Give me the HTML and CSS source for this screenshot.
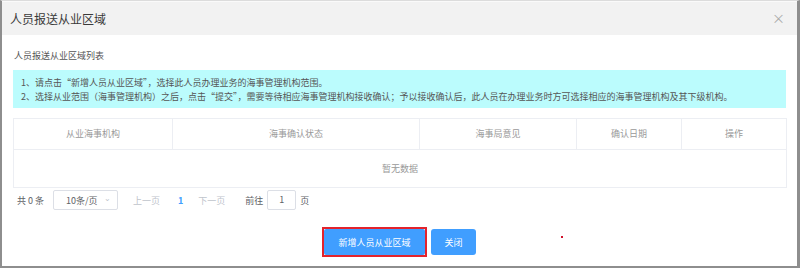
FILE: index.html
```html
<!DOCTYPE html>
<html lang="zh-CN">
<head>
  <meta charset="UTF-8" />
  <title>人员报送从业区域</title>
  <link rel="stylesheet" href="styles.css">
</head>
<body>
  <div class="dialog">
    <!-- Header -->
    <div class="dialog-header">
      <span class="dialog-title">人员报送从业区域</span>
      <span class="dialog-close">&times;</span>
    </div>

    <div class="dialog-body">
      <div class="caption">人员报送从业区域列表</div>

      <div class="tips">
        <p>1、请点击“新增人员从业区域”，选择此人员办理业务的海事管理机构范围。</p>
        <p>2、选择从业范围（海事管理机构）之后，点击“提交”，需要等待相应海事管理机构接收确认；予以接收确认后，此人员在办理业务时方可选择相应的海事管理机构及其下级机构。</p>
      </div>

      <table class="area-table">
        <colgroup>
          <col style="width: 159px">
          <col style="width: 247px">
          <col style="width: 157px">
          <col style="width: 105px">
          <col style="width: 105px">
        </colgroup>
        <thead>
          <tr>
            <th>从业海事机构</th>
            <th>海事确认状态</th>
            <th>海事局意见</th>
            <th>确认日期</th>
            <th>操作</th>
          </tr>
        </thead>
        <tbody>
          <tr><td colspan="5" class="empty">暂无数据</td></tr>
        </tbody>
      </table>

      <!-- Pagination -->
      <div class="pager">
        <span class="pager-total">共 0 条</span>
        <span class="pager-size">10条/页 <span class="arrow">&#8964;</span></span>
        <span class="pager-btn">上一页</span>
        <span class="pager-num">1</span>
        <span class="pager-btn">下一页</span>
        <span class="pager-jump">前往</span>
        <span class="pager-input">1</span>
        <span class="pager-jump">页</span>
      </div>

      <div class="footer">
        <div class="highlight">
          <button class="btn">新增人员从业区域</button>
        </div>
        <button class="btn btn-close">关闭</button>
        <span class="red-dot"></span>
      </div>
    </div>
  </div>
</body>
</html>
```

FILE: styles.css
```css
body {
  margin: 0;
  background: #fff;
  font-family: "Noto Sans CJK SC", "Microsoft YaHei", sans-serif;
  color: #555;
}

.dialog {
  position: relative;
  width: 800px;
  height: 268px;
  box-sizing: border-box;
  border-top: 1px solid #dcdcdc;
  border-left: 2px solid #8e8e8e;
  border-right: 3px solid #8e8e8e;
  border-bottom: 2px solid #8e8e8e;
  background: #fff;
}

.dialog-header {
  display: flex;
  align-items: center;
  justify-content: space-between;
  height: 33px;
  padding: 0 12px 0 8px;
  background: #f2f2f2;
  border-top: 1px solid #fafafa;
}

.dialog-title {
  font-size: 12px;
  color: #3a3a3a;
}

.dialog-close {
  font-size: 13px;
  color: #aaa;
  margin-top: -3px;
}

.dialog-body {
  padding: 0 11px;
}

.caption {
  font-size: 9px;
  line-height: 14px;
  margin-top: 14px;
  padding-left: 1px;
  color: #555;
}

.tips {
  margin-top: 7px;
  padding: 6px 8px 4px;
  background: #bbfcfd;
  font-size: 9px;
  line-height: 14px;
  color: #555;
}

.tips p {
  margin: 0;
}

/* Table */
.area-table {
  width: 100%;
  margin-top: 10px;
  border-collapse: collapse;
  table-layout: fixed;
  font-size: 9px;
  line-height: 12px;
}

.area-table th,
.area-table td {
  padding: 0;
  border: 1px solid #eceef3;
  text-align: center;
  color: #999;
  font-weight: normal;
}

.area-table th {
  height: 30px;
}

.area-table td.empty {
  height: 37px;
}

/* Pagination */
.pager {
  display: flex;
  align-items: center;
  height: 20px;
  margin-top: 2px;
  font-size: 9px;
  color: #606266;
}

.pager-total {
  margin-left: 4px;
  width: 36px;
}

.pager-size {
  display: flex;
  align-items: center;
  justify-content: space-between;
  box-sizing: border-box;
  width: 65px;
  height: 20px;
  padding: 0 6px 0 12px;
  border: 1px solid #dcdfe6;
  border-radius: 2px;
}

.pager-size .arrow {
  color: #c0c4cc;
  font-size: 8px;
  margin-top: -5px;
}

.pager-btn {
  color: #c0c4cc;
  margin: 0 0 0 15px;
}

.pager-num {
  color: #409eff;
  font-weight: bold;
  margin-left: 18px;
}

.pager-num + .pager-btn {
  margin-left: 15px;
}

.pager-jump {
  margin-left: 20px;
}

.pager-input {
  box-sizing: border-box;
  width: 29px;
  height: 20px;
  line-height: 18px;
  margin-left: 4px;
  text-align: center;
  border: 1px solid #dcdfe6;
  border-radius: 2px;
}

.pager-input + .pager-jump {
  margin-left: 4px;
}

/* Footer buttons */
.footer {
  position: relative;
  display: flex;
  justify-content: center;
  align-items: center;
  gap: 4px;
  margin-top: 17px;
  padding-right: 1px;
}

.highlight {
  border: 2px solid #e3232c;
}

.btn {
  display: block;
  height: 26px;
  padding: 0 14px;
  border: none;
  border-radius: 3px;
  background: #409eff;
  color: #fff;
  font-family: inherit;
  font-size: 9px;
}

.highlight .btn {
  width: 101px;
  padding: 0;
  border-radius: 2px;
}

.btn-close {
  width: 45px;
  padding: 0;
}

.red-dot {
  position: absolute;
  left: 548px;
  top: 9px;
  width: 2px;
  height: 2px;
  background: #d0102a;
}
```
